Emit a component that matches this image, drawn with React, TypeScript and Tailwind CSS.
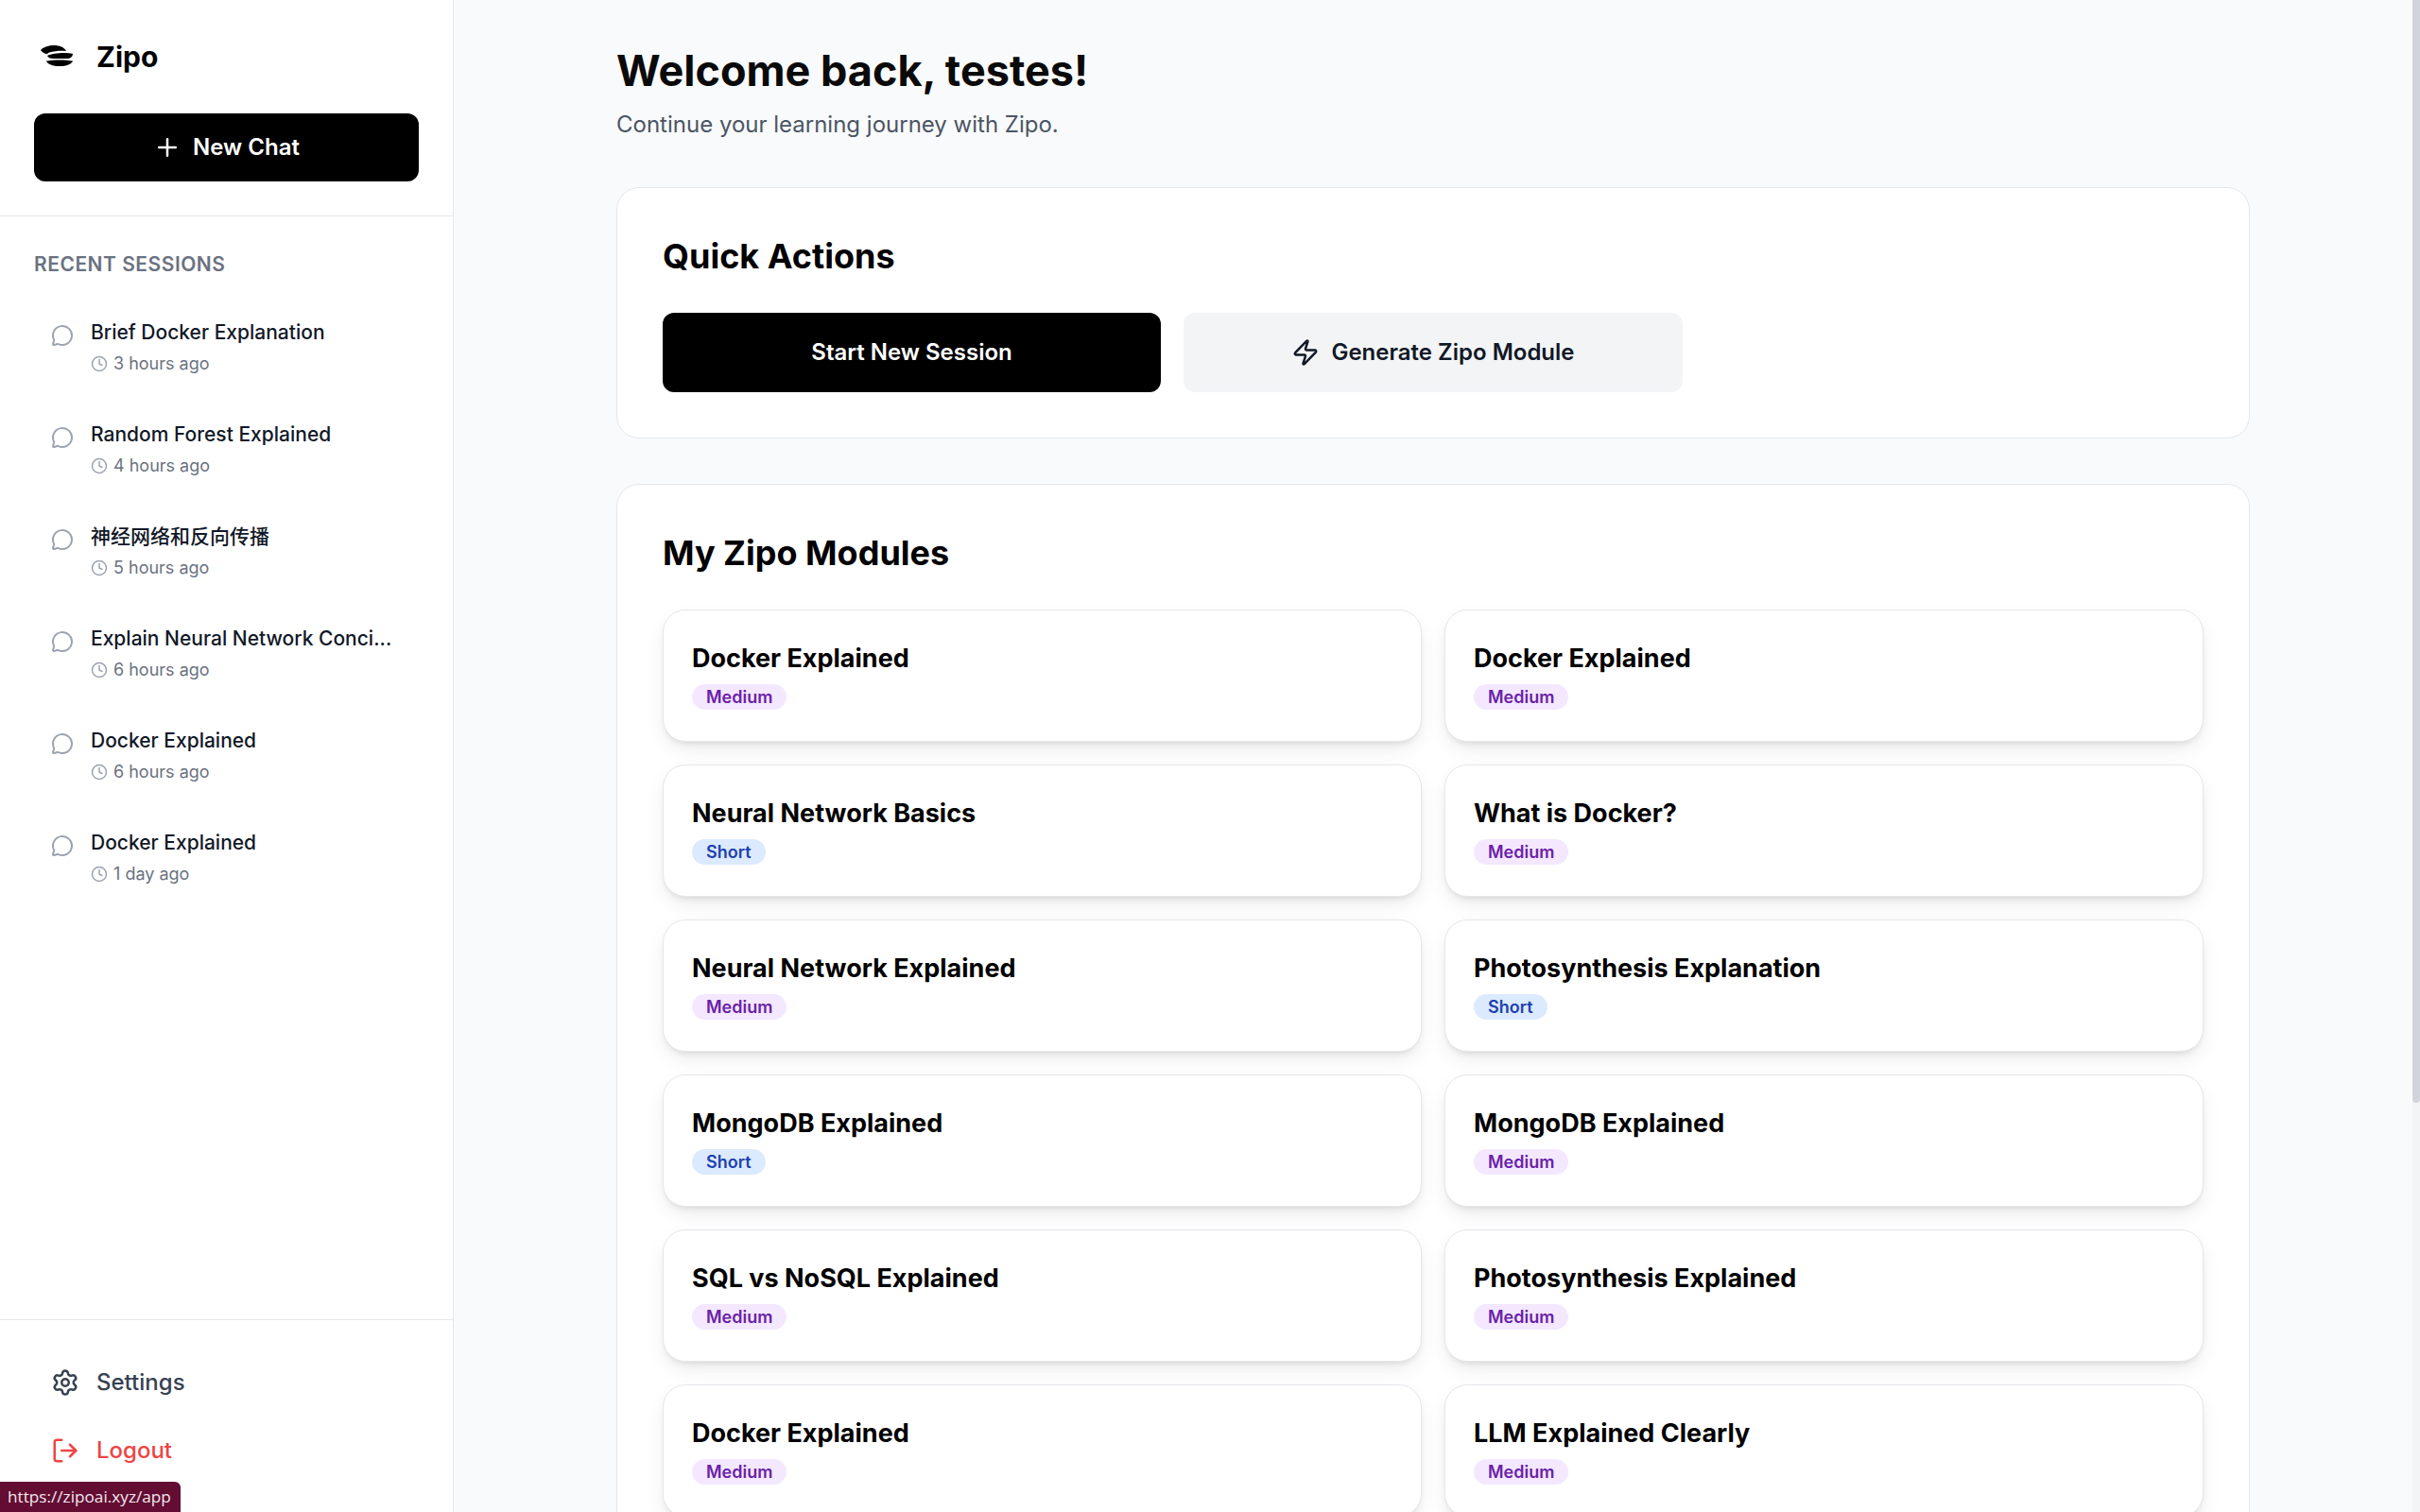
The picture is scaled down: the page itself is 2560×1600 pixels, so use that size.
import { Clock, LogOut, MessageCircle, Plus, Settings, Zap } from "lucide-react";

const sessions = [
  { title: "Brief Docker Explanation", time: "3 hours ago" },
  { title: "Random Forest Explained", time: "4 hours ago" },
  { title: "神经网络和反向传播", time: "5 hours ago" },
  { title: "Explain Neural Network Conci...", time: "6 hours ago" },
  { title: "Docker Explained", time: "6 hours ago" },
  { title: "Docker Explained", time: "1 day ago" },
];

const modules = [
  { title: "Docker Explained", length: "Medium" },
  { title: "Docker Explained", length: "Medium" },
  { title: "Neural Network Basics", length: "Short" },
  { title: "What is Docker?", length: "Medium" },
  { title: "Neural Network Explained", length: "Medium" },
  { title: "Photosynthesis Explanation", length: "Short" },
  { title: "MongoDB Explained", length: "Short" },
  { title: "MongoDB Explained", length: "Medium" },
  { title: "SQL vs NoSQL Explained", length: "Medium" },
  { title: "Photosynthesis Explained", length: "Medium" },
  { title: "Docker Explained", length: "Medium" },
  { title: "LLM Explained Clearly", length: "Medium" },
];

function Logo() {
  return (
    <svg viewBox="0 0 48 48" className="w-12 h-12 shrink-0" fill="#000">
      <path d="M7 17C10 13.500 16 12 21 12c6 0 11 2 13 6-6-.5-12 0-18 1.500-1 .5-1.500 1-2 1.500-3 0-5.500-2-7-4z" />
      <path d="M14 23c5-2.500 19-4 27-2 0 3-3 5-6 5H20c-3 0-5-1-6-3z" />
      <path d="M13 28.500c7-1.500 21-1.500 28 0-1 3.500-7 5.500-14 5.500S14 32 13 28.500z" />
    </svg>
  );
}

function SessionRow({ title, time }: { title: string; time: string }) {
  return (
    <div className="flex items-start gap-[18px] h-[108px] pl-[54px] pt-[24px]">
      <MessageCircle className="w-6 h-6 mt-[6px] shrink-0 text-[#9ca3af]" strokeWidth={2} />
      <div className="min-w-0">
        <div className="text-[21px] leading-[30px] font-medium text-[#111827] truncate">{title}</div>
        <div className="flex items-center gap-[6px] mt-[4px] text-[18px] leading-[27px] text-[#6b7280]">
          <Clock className="w-[18px] h-[18px] text-[#9ca3af]" strokeWidth={2} />
          {time}
        </div>
      </div>
    </div>
  );
}

function ModuleCard({ title, length }: { title: string; length: string }) {
  const short = length === "Short";
  return (
    <div className="h-[140px] rounded-[24px] border border-[#e5e7eb] bg-white px-[30px] pt-[30px] shadow-[0_9px_22px_-4px_rgba(0,0,0,0.1),0_4px_6px_-3px_rgba(0,0,0,0.1)]">
      <h3 className="text-[27px] leading-[42px] font-bold text-black">{title}</h3>
      <span
        className={`inline-block mt-[6px] rounded-full px-[15px] text-[18px] leading-[27px] font-semibold ${
          short ? "bg-[#dbeafe] text-[#1e40af]" : "bg-[#f3e8ff] text-[#6b21a8]"
        }`}
      >
        {length}
      </span>
    </div>
  );
}

export default function App() {
  return (
    <div className="relative flex h-[1600px] w-[2560px] overflow-hidden bg-[#f9fafb] font-['Inter','Noto_Sans_CJK_SC',sans-serif]">
      <aside className="flex w-[480px] shrink-0 flex-col border-r border-[#e5e7eb] bg-white">
        <div className="border-b border-[#e5e7eb] p-[36px]">
          <div className="flex h-12 items-center gap-[18px]">
            <Logo />
            <span className="text-[30px] font-bold text-black">Zipo</span>
          </div>
          <button className="mt-[36px] flex h-[72px] w-full items-center justify-center gap-[12px] rounded-[12px] bg-black text-[24px] font-semibold text-white">
            <Plus className="w-[30px] h-[30px]" strokeWidth={2} />
            New Chat
          </button>
        </div>
        <div className="flex-1 pt-[36px]">
          <div className="px-[36px] text-[21px] leading-[30px] font-semibold tracking-[0.5px] text-[#6b7280]">RECENT SESSIONS</div>
          <div className="mt-[18px]">
            {sessions.map((s, i) => (
              <SessionRow key={i} title={s.title} time={s.time} />
            ))}
          </div>
        </div>
        <div className="h-[204px] shrink-0 border-t border-[#e5e7eb] px-[54px] pt-[30px] text-[24px] font-medium">
          <div className="flex h-[72px] items-center gap-[18px] text-[#374151]">
            <Settings className="w-[30px] h-[30px]" strokeWidth={2} />
            Settings
          </div>
          <div className="flex h-[72px] items-center gap-[18px] text-[#ef4444]">
            <LogOut className="w-[30px] h-[30px]" strokeWidth={2} />
            Logout
          </div>
        </div>
      </aside>

      <main className="flex-1 overflow-hidden">
        <div className="mx-auto w-[1728px] pt-[48px]">
          <h1 className="text-[45px] leading-[54px] font-bold text-[#0a0a0a]">Welcome back, testes!</h1>
          <p className="mt-[12px] text-[24px] leading-[36px] text-[#4b5563]">Continue your learning journey with Zipo.</p>

          <section className="mt-[48px] rounded-[24px] border border-[#e5e7eb] bg-white p-[48px]">
            <h2 className="text-[36px] leading-[48px] font-bold text-black">Quick Actions</h2>
            <div className="mt-[36px] flex gap-[24px]">
              <button className="flex h-[84px] w-[527px] items-center justify-center rounded-[12px] bg-black text-[24px] font-semibold text-white">
                Start New Session
              </button>
              <button className="flex h-[84px] w-[528px] items-center justify-center gap-[12px] rounded-[12px] bg-[#f3f4f6] text-[24px] font-semibold text-[#111827]">
                <Zap className="w-[30px] h-[30px]" strokeWidth={2} />
                Generate Zipo Module
              </button>
            </div>
          </section>

          <section className="mt-[48px] rounded-[24px] border border-[#e5e7eb] bg-white p-[48px]">
            <h2 className="text-[36px] leading-[48px] font-bold text-black">My Zipo Modules</h2>
            <div className="mt-[36px] grid grid-cols-2 gap-[24px]">
              {modules.map((m, i) => (
                <ModuleCard key={i} title={m.title} length={m.length} />
              ))}
            </div>
          </section>
        </div>
      </main>

      <div className="w-2 shrink-0 bg-[#f3f4f6]">
        <div className="h-[1167px] rounded-b-[4px] bg-[#d1d5db]" />
      </div>

      <div className="absolute bottom-0 left-0 flex h-[32px] w-[191px] items-center rounded-tr-[6px] bg-[#630d33] pl-[8px] font-['Open_Sans',sans-serif] text-[17.2px] text-[#f3e8ee]">
        https://zipoai.xyz/app
      </div>
    </div>
  );
}
